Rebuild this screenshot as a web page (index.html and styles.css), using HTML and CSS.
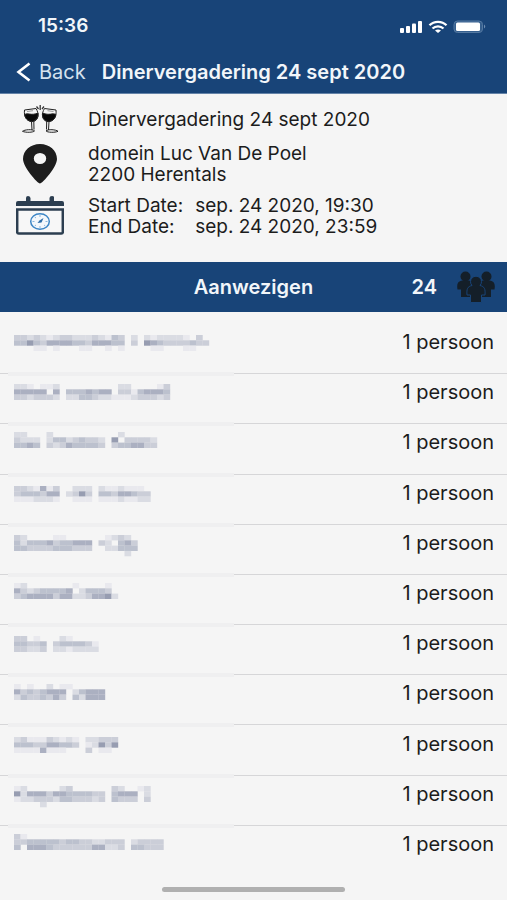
FILE: index.html
```html
<!DOCTYPE html>
<html lang="nl">
<head>
<meta charset="utf-8">
<meta name="viewport" content="width=device-width, initial-scale=1">
<title>Dinervergadering 24 sept 2020</title>
<link rel="stylesheet" href="styles.css">
</head>
<body>
<header class="top">
  <div class="status">
    <span class="time">15:36</span>
    <svg class="status-icons" width="88" height="16" viewBox="0 0 88 16" aria-hidden="true">
      <g fill="#fff">
        <rect x="1" y="10" width="4" height="5" rx="1"/>
        <rect x="7" y="8" width="4" height="7" rx="1"/>
        <rect x="13" y="5.500" width="4" height="9.500" rx="1"/>
        <rect x="19" y="3" width="4" height="12" rx="1"/>
        <path d="M39 15l-3-2.600a5 4 0 0 1 6 0z"/>
      </g>
      <g fill="none" stroke="#fff" stroke-width="2.300">
        <path d="M30.500 7.300C35 2.700 43 2.700 47.500 7.300"/>
        <path d="M33.500 10.500C36.500 7.600 41.500 7.600 44.500 10.500"/>
      </g>
      <rect x="55" y="3" width="28.500" height="11.500" rx="3.500" fill="#355f8e" stroke="#5479a2"/>
      <rect x="57" y="4.500" width="24" height="8.500" rx="1.500" fill="#fff"/>
      <path d="M85 6.500q2.500 2 0 4z" fill="#6f8fb3"/>
    </svg>
  </div>
  <nav class="nav">
    <a class="back" href="#">
      <svg width="16" height="20" viewBox="0 0 16 20" aria-hidden="true"><path d="M13.500 1.500L2.500 10l11 8.500" fill="none" stroke="#fff" stroke-width="2.600"/></svg>
      <span>Back</span>
    </a>
    <h1 class="title">Dinervergadering 24 sept 2020</h1>
  </nav>
</header>

<main class="main">
  <section class="details">
    <div class="detail">
      <svg class="icon" width="48" height="28" viewBox="0 0 48 28" aria-hidden="true">
        <g stroke="#222" stroke-width="1" fill="none">
          <path d="M8.500 5L20 3.500C23.500 9 22.500 15 17.500 16.500C12 17.500 7.500 12.500 8.500 5z"/>
          <path d="M8.700 9.500C12 7.500 15 11 22 8C22.500 13 20 16 16.500 16.300C12 16.500 9 13.500 8.700 9.500z" fill="#080808"/>
          <path d="M15.500 16.500l.5 8.500M17.800 16.500l.2 8"/>
          <path d="M6.500 26.300c2-1.800 10-2.300 12-.4c-1 1.600-9 1.900-12 .4z"/>
          <path d="M11 6.500l6-.8" stroke="#999"/>
        </g>
        <g stroke="#222" stroke-width="1" fill="none" transform="matrix(-1 0 0 1 48.500 0)">
          <path d="M8.500 5L20 3.500C23.500 9 22.500 15 17.500 16.500C12 17.500 7.500 12.500 8.500 5z"/>
          <path d="M8.700 9.500C12 7.500 15 11 22 8C22.500 13 20 16 16.500 16.300C12 16.500 9 13.500 8.700 9.500z" fill="#080808"/>
          <path d="M15.500 16.500l.5 8.500M17.800 16.500l.2 8"/>
          <path d="M6.500 26.300c2-1.800 10-2.300 12-.4c-1 1.600-9 1.900-12 .4z"/>
          <path d="M11 6.500l6-.8" stroke="#999"/>
        </g>
        <path d="M24.200 0v5M20.500 1.500l2 2.500M28 1.500l-2 2.500" stroke="#333" stroke-width="1.300"/>
      </svg>
      <p class="text">Dinervergadering 24 sept 2020</p>
    </div>
    <div class="detail">
      <svg class="icon" width="48" height="40" viewBox="0 0 48 40" aria-hidden="true">
        <path fill-rule="evenodd" fill="#1d1d1d" d="M24 39.500C21.500 39.500 7 23 7 15C7 6.500 14.500 0 24 0s17 6.500 17 15C41 23 26.500 39.500 24 39.500zM24 9a6.200 5.500 0 1 0 0 11a6.200 5.500 0 1 0 0-11z"/>
      </svg>
      <p class="text">domein Luc Van De Poel<br>2200 Herentals</p>
    </div>
    <div class="detail">
      <svg class="icon" width="48" height="40" viewBox="0 0 48 40" aria-hidden="true">
        <path fill="#2c3e50" d="M0 10V7q0-2 2-2h8V2q0-2 2-2t2.500 2v3h19V2q0-2 2.500-2T38 2v3h8q2 0 2 2v3z"/>
        <path d="M1.200 13.500h45.600V36q0 1.500-1.500 1.500H2.700q-1.500 0-1.500-1.500z" fill="#f7f7f7" stroke="#2c3e50" stroke-width="2.500"/>
        <ellipse cx="24" cy="25.500" rx="9.300" ry="7.800" fill="#f4f8fc" stroke="#3d86c6" stroke-width="1.500"/>
        <path d="M24 19v2M24 30v2M16.500 25.500h2M29.500 25.500h2M18.700 21l1.300 1M28 29l1.300 1M18.700 30l1.300-1" stroke="#8db8de" stroke-width="1"/>
        <path d="M21.500 27l2-2.500l4-2.500l-2 4.500z" fill="#2c6ca8"/>
      </svg>
      <dl class="text dates">
        <dt>Start Date:</dt><dd>sep. 24 2020, 19:30</dd>
        <dt>End Date:</dt><dd>sep. 24 2020, 23:59</dd>
      </dl>
    </div>
  </section>

  <div class="bar">
    <h2 class="bar-title">Aanwezigen</h2>
    <div class="bar-count">
      <span>24</span>
      <svg width="38" height="32" viewBox="0 0 38 32" aria-hidden="true">
        <g fill="#141f29">
          <ellipse cx="8.500" cy="5.500" rx="5" ry="5"/><path d="M5 9.500h7c4 1 4.500 3 4.500 9h-3V26H4v-7.500H.500c-1-6 .5-8 4.500-9z"/>
          <ellipse cx="29.500" cy="5.500" rx="5" ry="5"/><path d="M26 9.500h7c4 1 5.500 3 4.500 9H34V26h-9.500v-7.500h-3c0-6 .5-8 4.500-9z"/>
        </g>
        <path fill="#141f29" stroke="#184478" stroke-width="1" d="M15 14.500a5.500 5.500 0 1 1 8 0c4.500 1 5.500 3.500 5 9.500h-3.500v7.500h-11V24H10c-.5-6 .5-8.500 5-9.500z"/>
      </svg>
    </div>
  </div>

  <ul class="list" id="list"></ul>
</main>
<footer class="foot"><div class="home"></div></footer>
<script src="script.js"></script>
</body>
</html>
```
FILE: styles.css
```css
* {
  box-sizing: border-box;
}

body {
  margin: 0;
  min-height: 100vh;
  display: flex;
  flex-direction: column;
  background: #f5f5f5;
  color: #1c1c1c;
  font-family: Inter, "Liberation Sans", sans-serif;
  font-size: 20px;
  line-height: 20px;
}

h1, h2, p, dl, dd, ul {
  margin: 0;
  padding: 0;
}

.top {
  background: #184478;
  color: #f2f6fa;
  border-bottom: 1px solid #6483a8;
}

.status {
  display: flex;
  justify-content: space-between;
  align-items: center;
  height: 50px;
  padding: 2px 20px 0 38px;
}

.time {
  font-size: 19px;
  font-weight: 600;
}

.nav {
  display: flex;
  align-items: center;
  gap: 16px;
  height: 43px;
  padding: 0 16px;
}

.back {
  display: flex;
  align-items: center;
  gap: 7px;
  color: #d5e2ef;
  text-decoration: none;
}

.title {
  font-size: 20px;
  font-weight: 600;
  white-space: nowrap;
}

.main {
  flex: 1;
  display: flex;
  flex-direction: column;
}

.details {
  display: flex;
  flex-direction: column;
  gap: 10px;
  padding: 11px 16px 25px;
}

.detail {
  display: flex;
  align-items: center;
  gap: 24px;
}

.detail .text {
  font-size: 19px;
  line-height: 21px;
}

.icon {
  flex: none;
}

.dates {
  display: grid;
  grid-template-columns: auto auto;
  column-gap: 12px;
}

.bar {
  display: grid;
  grid-template-columns: 1fr auto 1fr;
  align-items: center;
  height: 50px;
  padding: 0 12px;
  background: #184478;
  color: #f2f6fa;
}

.bar-title {
  grid-column: 2;
  font-size: 20px;
  font-weight: 600;
}

.bar-count {
  display: flex;
  justify-content: flex-end;
  align-items: center;
  gap: 20px;
  font-weight: 600;
}

.list {
  flex: 1;
  display: grid;
  grid-auto-rows: 1fr;
  padding-top: 11px;
  list-style: none;
}

.row {
  position: relative;
  display: flex;
  justify-content: space-between;
  align-items: center;
  padding: 0 13px 13px 14px;
}

.row + .row {
  border-top: 1px solid #d6d6d8;
}

/* Soft band where the mask covers the divider */
.row + .row::before {
  content: "";
  position: absolute;
  top: -2px;
  left: 8px;
  width: 226px;
  height: 4px;
  background: #efeff0;
}

.mosaic {
  align-self: flex-start;
}

.foot {
  display: flex;
  justify-content: center;
  height: 25px;
  padding-top: 12px;
}

.home {
  width: 36%;
  height: 5px;
  border-radius: 3px;
  background: #b0b0b0;
}
```
FILE: script.js
```js
// Masked names: top offset inside the row, then lines of cell shades (0 = empty).
var people = [
  [12, "332321233222321430202122221030", "446435555443555440306543333433", "000110100011001010000110001100"],
  [10, "221011200000000022000013", "555550504445455033145554", "332333202244322111233323"],
  [8, "2200020000000000200000", "3222024423433206033332", "4454032354444303445533"],
  [11, "332151300222021121110", "344435502363044355433", "111222100111011121122"],
  [10, "3200001100000012320", "4244453445550320453", "4433334443330022444", "0000000000000000020"],
  [8, "1200000001000010", "5323444450244430", "3455553552235562"],
  [11, "3301000210000", "4433403444431", "3322302212222"],
  [9, "10100201100000", "53434555024555", "24334353042555"],
  [12, "2311132121022333", "4443355443012636", "1111511100030110"],
  [10, "120000023000000320012", "625553554444330455502", "122333244333230433303", "000020000000000000000"],
  [8, "31000000000000000000000", "33444443443322333023333", "40555433333355223044333"]
];
var shades = ["", "#e9e9ee", "#dadce3", "#cbced8", "#bcc1ce", "#abb0c1", "#979db1"];
var cellW = 6.5, cellH = 5.3;

function mosaic(person) {
  var out = "";
  person.slice(1).forEach(function (line, r) {
    line.split("").forEach(function (s, c) {
      if (s !== "0") {
        out += '<rect x="' + c * cellW + '" y="' + (person[0] + r * cellH) +
          '" width="6.7" height="5.4" fill="' + shades[s] + '"/>';
      }
    });
  });
  return '<svg class="mosaic" width="200" height="36" aria-hidden="true">' + out + "</svg>";
}

document.getElementById("list").innerHTML = people.map(function (p) {
  return '<li class="row">' + mosaic(p) + "<span>1 persoon</span></li>";
}).join("");
```
